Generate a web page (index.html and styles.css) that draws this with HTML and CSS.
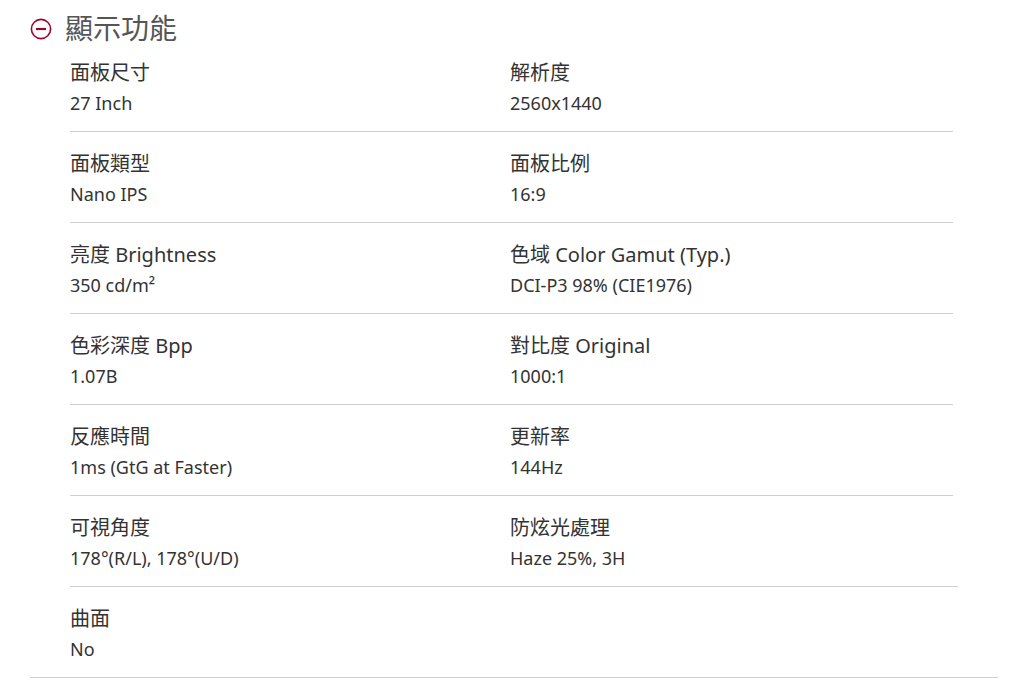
FILE: index.html
```html
<!DOCTYPE html>
<html lang="zh-Hant">
<head>
<meta charset="utf-8">
<link rel="stylesheet" href="styles.css">
</head>
<body>
<section class="spec">
  <h2 class="spec-title">
    <svg class="spec-icon" width="22" height="22" viewBox="0 0 22 22" aria-hidden="true">
      <circle cx="11" cy="11" r="9.6" fill="none" stroke="#a50034" stroke-width="1.6"/>
      <line x1="6" y1="11" x2="16" y2="11" stroke="#a50034" stroke-width="2.2"/>
    </svg>
    <span>顯示功能</span>
  </h2>
  <div class="spec-list">
    <div class="spec-row">
      <div class="spec-cell"><div class="label">面板尺寸</div><div class="value">27 Inch</div></div>
      <div class="spec-cell"><div class="label">解析度</div><div class="value">2560x1440</div></div>
    </div>
    <div class="spec-row">
      <div class="spec-cell"><div class="label">面板類型</div><div class="value">Nano IPS</div></div>
      <div class="spec-cell"><div class="label">面板比例</div><div class="value">16:9</div></div>
    </div>
    <div class="spec-row">
      <div class="spec-cell"><div class="label">亮度 Brightness</div><div class="value">350 cd/m²</div></div>
      <div class="spec-cell"><div class="label">色域 Color Gamut (Typ.)</div><div class="value">DCI-P3 98% (CIE1976)</div></div>
    </div>
    <div class="spec-row">
      <div class="spec-cell"><div class="label">色彩深度 Bpp</div><div class="value">1.07B</div></div>
      <div class="spec-cell"><div class="label">對比度 Original</div><div class="value">1000:1</div></div>
    </div>
    <div class="spec-row">
      <div class="spec-cell"><div class="label">反應時間</div><div class="value">1ms (GtG at Faster)</div></div>
      <div class="spec-cell"><div class="label">更新率</div><div class="value">144Hz</div></div>
    </div>
    <div class="spec-row spec-row--wide">
      <div class="spec-cell"><div class="label">可視角度</div><div class="value">178°(R/L), 178°(U/D)</div></div>
      <div class="spec-cell"><div class="label">防炫光處理</div><div class="value">Haze 25%, 3H</div></div>
    </div>
    <div class="spec-row spec-row--last">
      <div class="spec-cell"><div class="label">曲面</div><div class="value">No</div></div>
    </div>
  </div>
</section>
</body>
</html>
```
FILE: styles.css
```css
html, body {
  margin: 0;
  padding: 0;
  background: #fff;
}
body {
  font-family: "Noto Sans", "Noto Sans CJK TC", sans-serif;
  color: #333;
}
.spec {
  margin: 0 30px;
  border-bottom: 1px solid #cfcfcf;
}
.spec-title {
  display: flex;
  align-items: center;
  margin: 0;
  padding-top: 8px;
  height: 40px;
  font-size: 28px;
  line-height: 40px;
  font-weight: 400;
  color: #555;
}
.spec-icon {
  display: block;
  margin-left: 0;
  margin-right: 13px;
  position: relative;
  top: 1px;
}
.spec-list {
  margin-left: 40px;
}
.spec-row {
  display: flex;
  width: 883px;
  padding: 17px 0 13px;
  border-bottom: 1px solid #cfcfcf;
}
.spec-row:first-child {
  padding-top: 10px;
}
.spec-row--wide {
  width: 888px;
}
.spec-row--last {
  border-bottom: none;
}
.spec-cell {
  width: 440px;
}
.label {
  font-size: 20px;
  line-height: 30px;
  color: #333;
}
.value {
  font-size: 18px;
  line-height: 30px;
  color: #333;
}
```
